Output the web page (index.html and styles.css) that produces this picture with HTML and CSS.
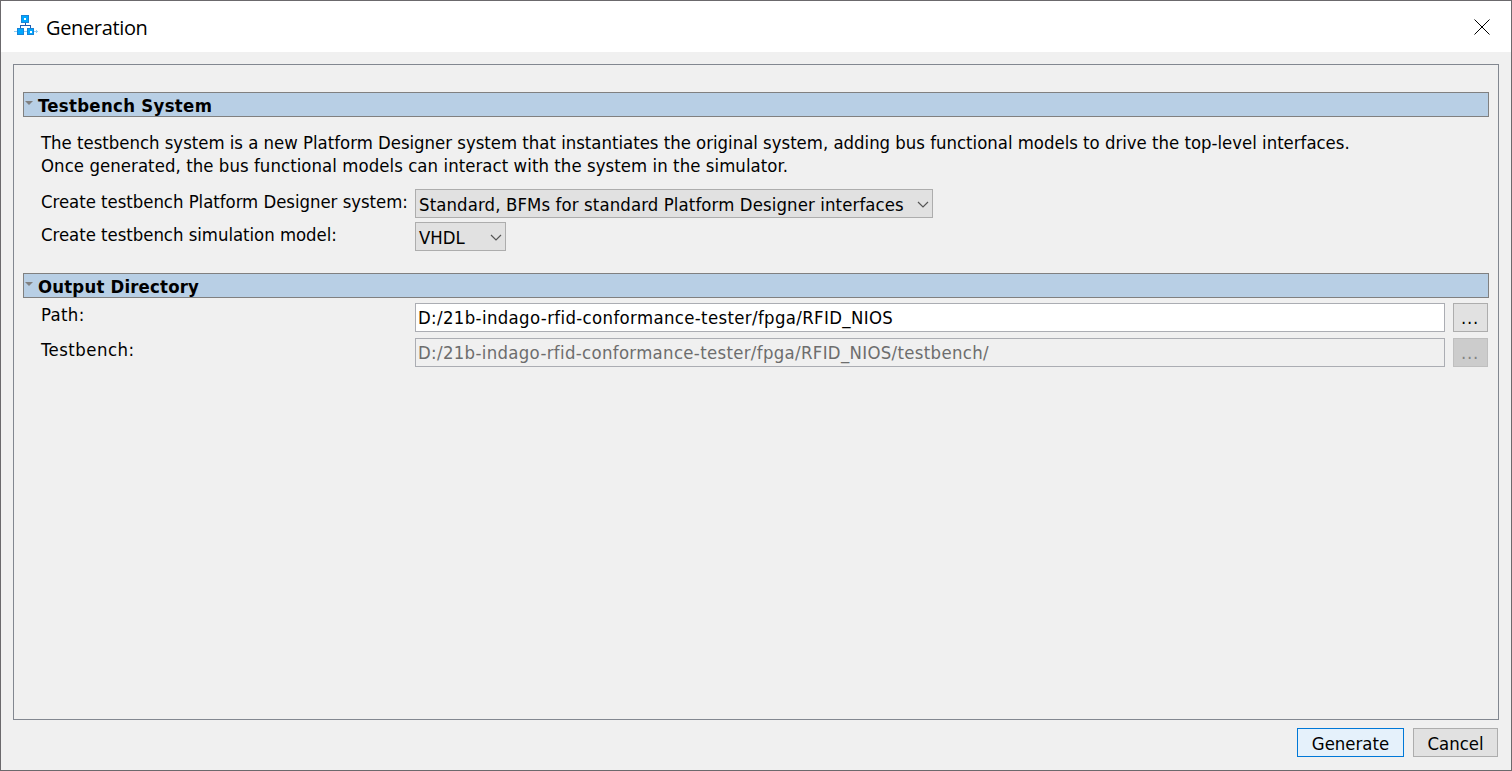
FILE: index.html
```
<!DOCTYPE html>
<html lang="en">
<head>
<meta charset="utf-8">
<title>Generation</title>
<link rel="stylesheet" href="styles.css">
</head>
<body>
<div class="dialog">
  <header class="titlebar">
    <svg class="app-icon" width="24" height="25" viewBox="0 0 24 25" shape-rendering="crispEdges">
      <path d="M0 17.500h24M22.500 16v3" fill="none" stroke="#8fcdf5"/>
      <path d="M11 9v3M6.500 14v-2.500h10V14" fill="none" stroke="#245cae"/>
      <path d="M7.500 1.500h7v7h-7zM3.500 14.500h6v6h-6zM13.500 14.500h6v6h-6z" fill="#00a8ff" stroke="#1a83d6"/>
      <path d="M10 4h2v2h-2zM16 17h2v2h-2z" fill="#fff"/>
    </svg>
    <h1 class="title">Generation</h1>
    <svg class="close" width="16" height="16" viewBox="0 0 16 16"><path d="M.5.5l15 15M15.500.500l-15 15" stroke="#000"/></svg>
  </header>
  <main class="panel">
    <section class="section">
      <h2 class="section-head"><svg class="arrow" width="8" height="4" viewBox="0 0 8 4"><path d="M0 0h8L4 4z" fill="#808080"/></svg><span class="head-testbench">Testbench System</span></h2>
      <p class="description">The testbench system is a new Platform Designer system that instantiates the original system, adding bus functional models to drive the top-level interfaces.<br><span class="line-two">Once generated, the bus functional models can interact with the system in the simulator.</span></p>
      <div class="row"><span class="label">Create testbench Platform Designer system:</span>
        <div class="select select-system"><span class="value-system">Standard, BFMs for standard Platform Designer interfaces</span><svg class="chevron" width="12" height="7" viewBox="0 0 12 7"><path d="M1 1l5 5 5-5" fill="none" stroke="#555" stroke-width="1.200"/></svg></div></div>
      <div class="row"><span class="label">Create testbench simulation model:</span>
        <div class="select select-model"><span>VHDL</span><svg class="chevron" width="12" height="7" viewBox="0 0 12 7"><path d="M1 1l5 5 5-5" fill="none" stroke="#555" stroke-width="1.200"/></svg></div></div>
    </section>
    <section class="section output">
      <h2 class="section-head"><svg class="arrow" width="8" height="4" viewBox="0 0 8 4"><path d="M0 0h8L4 4z" fill="#808080"/></svg><span class="head-output">Output Directory</span></h2>
      <div class="row path-row"><span class="label label-path">Path:</span><div class="field">D:/21b-indago-rfid-conformance-tester/fpga/RFID_NIOS</div><div class="browse">...</div></div>
      <div class="row path-row"><span class="label label-bench">Testbench:</span><div class="field disabled">D:/21b-indago-rfid-conformance-tester/fpga/RFID_NIOS/testbench/</div><div class="browse disabled">...</div></div>
    </section>
  </main>
  <footer class="actions"><div class="button primary">Generate</div><div class="button cancel">Cancel</div></footer>
</div>
</body>
</html>
```
FILE: styles.css
```
* { box-sizing: border-box; }
body { margin: 0; font-family: "DejaVu Sans Condensed", "DejaVu Sans", sans-serif; font-stretch: condensed; font-size: 18.4px; color: #000; white-space: nowrap; }
.dialog { width: 1512px; height: 771px; display: flex; flex-direction: column; background: #f0f0f0; border: 1px solid #6b696c; }
.titlebar { height: 51px; flex: none; display: flex; align-items: center; background: #fff; padding: 0 21px 0 13px; }
.title { margin: 0 auto 0 8px; padding-top: 2px; font: 400 20px/24px "Open Sans", sans-serif; letter-spacing: -0.35px; }
.panel { height: 656px; margin: 12px 12px 0; padding: 27px 9px 0; border: 1px solid #828790; }
.section-head { height: 25px; margin: 0; padding-left: 1px; display: flex; align-items: center; gap: 5px; border: 1px solid #808080; background: #b8cfe5; font-size: 18.4px; line-height: 21px; font-weight: 700; }
.section-head span { padding-top: 1px; }
.arrow { margin-bottom: 3px; }
.head-testbench { letter-spacing: 0.33px; }
.head-output { letter-spacing: 0.2px; }
.description { margin: 14px 0 12px 18px; line-height: 23px; letter-spacing: -0.005px; }
.line-two { letter-spacing: 0.07px; }
.row { display: flex; padding-left: 18px; margin-bottom: 4px; }
.label { width: 374px; line-height: 25px; letter-spacing: -0.02px; }
.label-path { line-height: 23px; letter-spacing: 0.35px; }
.label-bench { line-height: 23px; letter-spacing: 0.5px; }
.select { height: 29px; display: flex; align-items: center; justify-content: space-between; line-height: 21px; padding: 1px 3px 0; border: 1px solid #adadad; background: #e1e1e1; }
.select-system { width: 518px; }
.select-model { width: 91px; }
.value-system { letter-spacing: 0.12px; }
.output { margin-top: 22px; }
.path-row { margin: 5px 0 6px; }
.field { width: 1030px; height: 29px; line-height: 28px; padding-left: 2px; border: 1px solid #abadb3; background: #fff; letter-spacing: 0.36px; }
.field.disabled { background: #f0f0f0; color: #6d6d6d; letter-spacing: 0.33px; }
.browse { width: 35px; height: 29px; margin-left: 8px; padding-left: 7px; line-height: 28px; border: 1px solid #adadad; background: #e1e1e1; letter-spacing: 0.8px; }
.browse.disabled { background: #ccc; border-color: #bfbfbf; color: #838383; }
.actions { display: flex; justify-content: flex-end; gap: 9px; padding: 8px 13px 0; }
.button { height: 29px; display: flex; align-items: center; justify-content: center; line-height: 21px; padding-top: 1px; border: 1px solid #adadad; background: #e1e1e1; }
.primary { width: 107px; border-color: #0078d7; background: #e5f1fb; }
.cancel { width: 85px; }
```
